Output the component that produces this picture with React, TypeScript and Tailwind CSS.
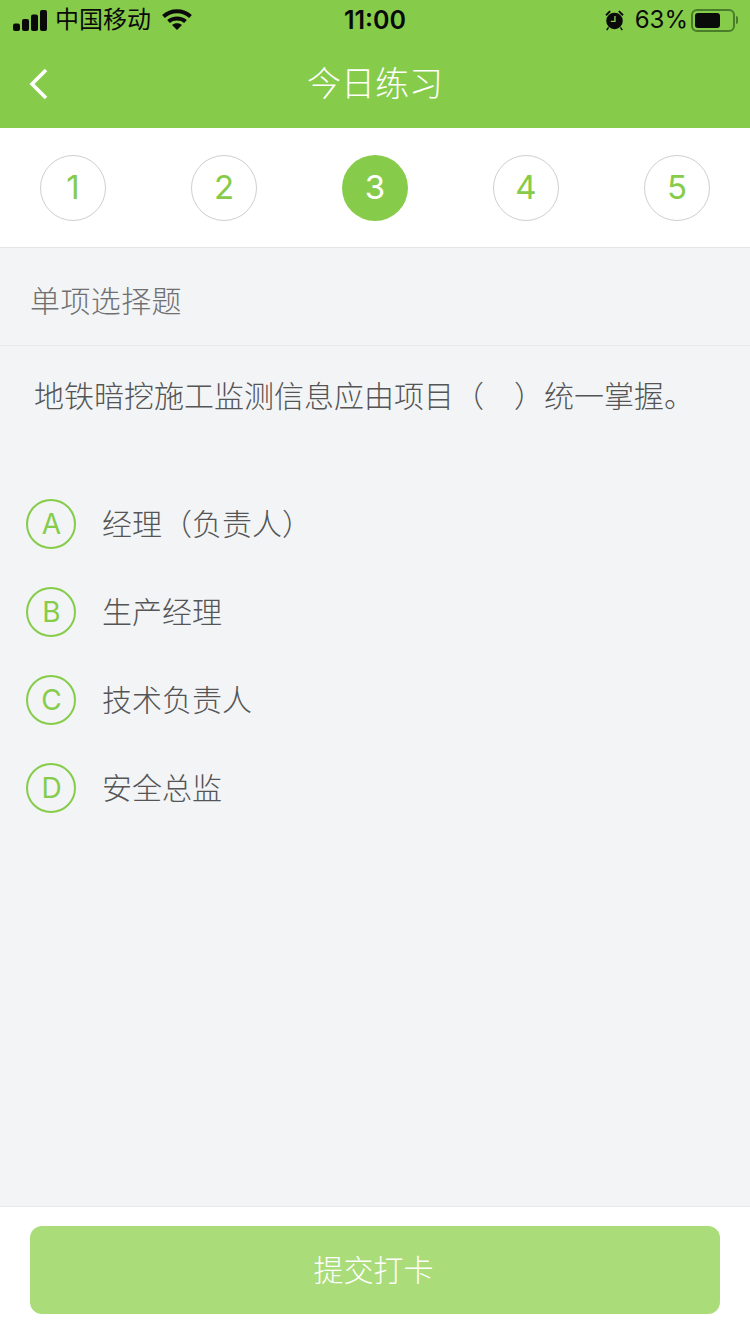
const FONT = "font-['Inter','Noto_Sans_CJK_SC',sans-serif]";

const STEPS = [1, 2, 3, 4, 5];
const CURRENT_STEP = 3;

const OPTIONS = [
  { key: "A", label: "经理（负责人）" },
  { key: "B", label: "生产经理" },
  { key: "C", label: "技术负责人" },
  { key: "D", label: "安全总监" },
];

function SignalIcon() {
  return (
    <svg width="34" height="21" viewBox="0 0 34 21" fill="#0a0a0a">
      <rect x="0" y="13.5" width="7" height="7.5" rx="2" />
      <rect x="9" y="9" width="7" height="12" rx="2" />
      <rect x="18" y="4.5" width="7" height="16.5" rx="2" />
      <rect x="27" y="0" width="7" height="21" rx="2" />
    </svg>
  );
}

function WifiIcon() {
  return (
    <svg width="30" height="22" viewBox="0 0 30 22" fill="none" stroke="#0a0a0a" strokeWidth="4">
      <path d="M1.5 7.5 C9 0.5 21 0.5 28.5 7.5" />
      <path d="M6.5 12.5 C11 8.5 19 8.5 23.5 12.5" />
      <path d="M10 16 L15 21 L20 16 C17 13.6 13 13.6 10 16 Z" fill="#0a0a0a" stroke="none" />
    </svg>
  );
}

function AlarmIcon() {
  return (
    <svg width="21" height="22" viewBox="0 0 22 24">
      <circle cx="11" cy="13" r="9" fill="#0a0a0a" />
      <path d="M1 6 L5.5 1.5 L7 3 L2.5 7.5 Z M21 6 L16.5 1.5 L15 3 L19.5 7.5 Z" fill="#0a0a0a" />
      <path d="M4.5 20 L2.5 23 M17.5 20 L19.5 23" stroke="#0a0a0a" strokeWidth="1.6" />
      <path d="M11.5 7.5 V13.5 H7" fill="none" stroke="#86cc4a" strokeWidth="1.5" />
    </svg>
  );
}

function BatteryIcon() {
  return (
    <div className="flex items-center">
      <div className="flex h-[23px] w-[44px] items-center rounded-[6px] border-2 border-[#4a7d2a] p-[2px]">
        <div className="h-full w-[25px] rounded-[3px] bg-[#0a0a0a]" />
      </div>
      <div className="ml-[1px] h-[8px] w-[2px] rounded-r-sm bg-[#4a7d2a]" />
    </div>
  );
}

function StatusBar() {
  return (
    <div className="relative flex h-[40px] items-center justify-between pl-[13px] pr-[12px] text-[#0a0a0a]">
      <div className="flex items-center">
        <SignalIcon />
        <span className="ml-[8px] text-[24px] leading-none">中国移动</span>
        <span className="ml-[11px]">
          <WifiIcon />
        </span>
      </div>
      <span className="absolute left-0 right-0 text-center text-[25px] font-semibold leading-none">11:00</span>
      <div className="flex items-center">
        <AlarmIcon />
        <span className="ml-[10px] text-[24px] leading-none">63%</span>
        <span className="ml-[3px]">
          <BatteryIcon />
        </span>
      </div>
    </div>
  );
}

function NavBar() {
  return (
    <div className="relative flex h-[88px] items-center justify-center">
      <svg className="absolute left-[29px] top-[28px]" width="20" height="32" viewBox="0 0 20 32" fill="none" stroke="#fff" strokeWidth="3.6">
        <path d="M17 2 L3 16 L17 30" />
      </svg>
      <h1 className="text-[34px] font-light leading-none text-white">今日练习</h1>
    </div>
  );
}

function StepCircle({ step }: { step: number }) {
  const active = step === CURRENT_STEP;
  return (
    <div
      className={
        active
          ? "flex h-[66px] w-[66px] items-center justify-center rounded-full bg-[#86cc4a] text-[33px] text-white"
          : "flex h-[66px] w-[66px] items-center justify-center rounded-full border border-[#cfcfcf] text-[33px] text-[#86cc4a]"
      }
    >
      {step}
    </div>
  );
}

function OptionRow({ option }: { option: (typeof OPTIONS)[number] }) {
  return (
    <div className="flex h-[88px] items-center pl-[26px]">
      <div className="flex h-[50px] w-[50px] items-center justify-center rounded-full border-2 border-[#86cc4a] pl-[1px] text-[28px] text-[#86cc4a]">
        {option.key}
      </div>
      <span className="ml-[26px] text-[30px] font-light leading-none text-[#555]">{option.label}</span>
    </div>
  );
}

export default function App() {
  return (
    <div className={`${FONT} flex h-[1334px] w-[750px] flex-col bg-[#f2f4f6]`}>
      <header className="bg-[#86cc4a]">
        <StatusBar />
        <NavBar />
      </header>

      <div className="flex h-[120px] items-center justify-between border-b border-[#e6e6e6] bg-white px-[40px] pt-[1px]">
        {STEPS.map((step) => (
          <StepCircle key={step} step={step} />
        ))}
      </div>

      <div className="flex h-[98px] items-center border-b border-[#e8e9eb] pl-[30px] pt-[8px]">
        <span className="text-[30px] font-light leading-none tracking-[0.4px] text-[#707070]">单项选择题</span>
      </div>

      <p className="pl-[34px] pt-[35px] text-[30px] font-light leading-[30px] text-[#555]">
        地铁暗挖施工监测信息应由项目（<span className="inline-block w-[30px]" />）统一掌握。
      </p>

      <div className="mt-[69px] flex flex-col">
        {OPTIONS.map((option) => (
          <OptionRow key={option.key} option={option} />
        ))}
      </div>

      <div className="mt-auto h-[128px] border-t border-[#e8e9eb] bg-white px-[30px] pt-[19px]">
        <button className="h-[88px] w-full rounded-[12px] bg-[#aadc7a] pr-[3px] text-[30px] font-light text-white">提交打卡</button>
      </div>
    </div>
  );
}
